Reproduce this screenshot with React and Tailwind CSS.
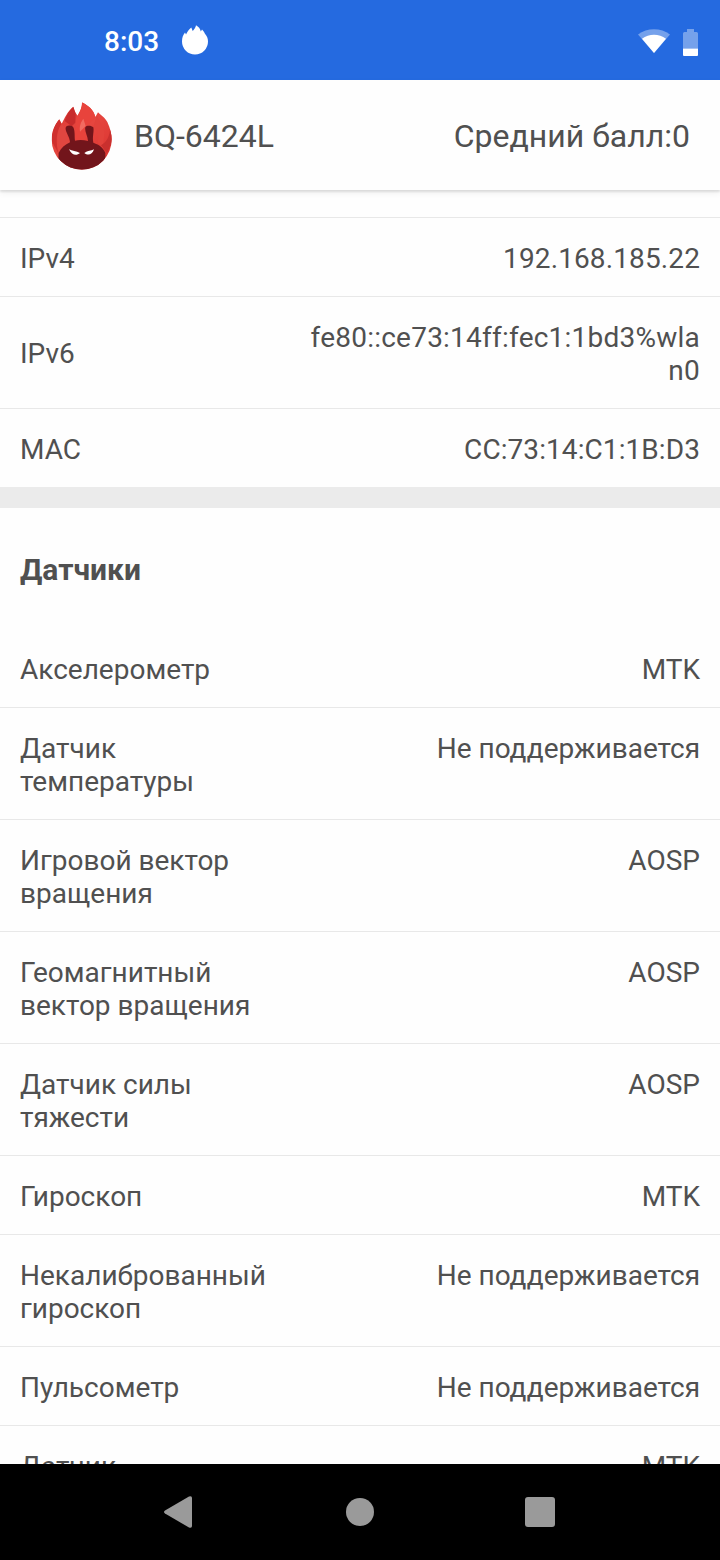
import React from 'react';

const network = [
    { label: 'IPv4', value: '192.168.185.22', spacing: 'tracking-[0.12px]' },
    { label: 'IPv6', value: 'fe80::ce73:14ff:fec1:1bd3%wlan0', centered: true, spacing: 'tracking-[0.23px]' },
    { label: 'MAC', value: 'CC:73:14:C1:1B:D3', spacing: 'tracking-[0.08px]' },
];

const sensors = [
    { label: 'Акселерометр', value: 'MTK' },
    { label: 'Датчик температуры', value: 'Не поддерживается' },
    { label: 'Игровой вектор вращения', value: 'AOSP' },
    { label: 'Геомагнитный вектор вращения', value: 'AOSP' },
    { label: 'Датчик силы тяжести', value: 'AOSP' },
    { label: 'Гироскоп', value: 'MTK' },
    { label: 'Некалиброванный гироскоп', value: 'Не поддерживается' },
    { label: 'Пульсометр', value: 'Не поддерживается' },
    { label: 'Датчик освещённости', value: 'MTK' },
];

const FlameIcon = () => (
    <svg className="h-[30px] w-[26px]" viewBox="0 0 26 30" fill="#fff">
        <path d="M0 16.500C0 12.500 1 10 3 7.500L4 9.500C5 7 7 4.500 9.300 2.500L10.700 6C12.200 4.500 13.800 2.500 14 .3C16.500 2 18.300 3.500 18.800 6.500L20 4.500C21.300 6 22.300 7 22.800 8.500C25 11 26 13.500 26 16.500a13 13 0 0 1-26 0z" />
    </svg>
);

const WifiIcon = () => (
    <svg className="h-[24px] w-[32px]" viewBox="0 0 32 24" fill="#fff">
        <path d="M0 5.500C9-1.600 23-1.600 32 5.500L16 24z" opacity=".37" />
        <path d="M4 9.700C11 4.400 21 4.400 28 9.700L16 24z" />
    </svg>
);

const BatteryIcon = () => (
    <svg className="h-[27px] w-[15px]" viewBox="0 0 15 27" fill="#fff">
        <path d="M4 0h7v3h2.500A1.500 1.500 0 0 1 15 4.500V19.500H0V4.500A1.500 1.500 0 0 1 1.500 3H4z" opacity=".37" />
        <path d="M0 19.500h15V26a1 1 0 0 1-1 1H1a1 1 0 0 1-1-1z" />
    </svg>
);

const Logo = () => (
    <svg className="h-[68px] w-[62px]" viewBox="34 37 186 204">
        <defs>
            <linearGradient id="flame" x1="0" y1="0" x2="1" y2="1">
                <stop offset="0" stopColor="#d93a34" />
                <stop offset=".5" stopColor="#e6463f" />
                <stop offset="1" stopColor="#d72f2c" />
            </linearGradient>
            <clipPath id="disc">
                <path d="M36 151C36 126 44 107 59 89L66 102C76 84 82 66 101 51C105 62 106 69 114 78C121 65 127 55 127 38C146 48 162 60 167 82L175 68C185 78 194 82 203 97C212 117 216 133 216 149A90 90 0 0 1 36 151z" />
            </clipPath>
        </defs>
        <g clipPath="url(#disc)">
            <path d="M30 30h190v215H30z" fill="url(#flame)" />
            <path d="M101 50C90 60 80 78 75 94L96 110 107 99 108 72z" fill="#c82c2c" />
            <path d="M58 88C44 105 36 128 36 154L58 194C48 164 48 124 66 102z" fill="#cf302e" />
            <path d="M66 102C49 130 50 158 66 184L88 160 78 116z" fill="#e04640" />
            <path d="M127 38C127 56 116 68 109 89L105 153H138L140 109 168 83C163 59 149 49 127 38z" fill="#e8433c" />
            <path d="M131 87C124 97 118 109 121 126L138 109z" fill="#f16b61" />
            <path d="M161 111C173 121 179 134 174 158L190 178 194 128C189 105 179 96 172 77z" fill="#e2423b" />
            <path d="M211 115C211 140 200 158 184 167L202 190 220 150z" fill="#c9302e" />
            <path d="M91 158C90 140 76 126 78 114C80 106 92 105 100 111C107 123 104 140 106 153C119 150 132 151 145 154C144 138 134 123 137 113C141 106 156 108 161 113C164 125 157 143 161 159C180 166 190 173 197 190L196 245H55L57 190C64 175 76 165 91 158z" fill="#72151b" />
            <path d="M88 179C97 184 110 184 121 190C111 199 97 198 88 179zM163 179C154 184 144 183 134 190C144 198 157 197 163 179z" fill="#fff" />
        </g>
    </svg>
);

const Row = ({ label, value, centered, spacing = '', last }) => (
    <div
        className={`flex shrink-0 justify-between px-5 pt-6 pb-[21px] ${centered ? 'items-center' : 'items-start'} ${
            last ? '' : 'border-b border-[#e8e8e8]'
        }`}
    >
        <div className={`w-[250px] pr-1 ${centered ? 'pb-0.5' : ''}`}>{label}</div>
        <div className={`w-[396px] break-all text-right ${spacing}`}>{value}</div>
    </div>
);

const App = () => {
    return (
        <div className="flex h-[1560px] w-[720px] flex-col overflow-hidden bg-[#fefefe] font-[Roboto,sans-serif] text-[28px] leading-[33px] text-[#505050]">
            <div className="flex h-20 shrink-0 items-center bg-[#256ae0] pt-[2px] pr-[22px] pl-[104px] text-white">
                <span className="w-[78px] font-medium">8:03</span>
                <div className="pb-[2px]">
                    <FlameIcon />
                </div>
                <div className="ml-auto flex items-center gap-[13px]">
                    <WifiIcon />
                    <div className="pt-[3px]">
                        <BatteryIcon />
                    </div>
                </div>
            </div>

            <div className="z-10 flex h-[110px] shrink-0 items-center bg-[#fefefe] pt-[2px] pr-[30px] pl-[51px] text-[32px] shadow-[0_2px_2px_rgba(0,0,0,0.10),0_3px_7px_rgba(0,0,0,0.06)]">
                <Logo />
                <span className="ml-[21px]">BQ-6424L</span>
                <span className="ml-auto">Средний балл:0</span>
            </div>

            <div className="flex min-h-0 flex-1 flex-col overflow-hidden">
                <div className="h-7 shrink-0 border-b border-[#e8e8e8]" />
                {network.map((item, index) => (
                    <Row key={item.label} {...item} last={index === network.length - 1} />
                ))}
                <div className="h-[21px] shrink-0 bg-[#ebebeb]" />
                <h2 className="flex h-[121px] shrink-0 items-center px-5 pt-[2px] text-[30px] font-bold">Датчики</h2>
                {sensors.map((item) => (
                    <Row key={item.label} {...item} />
                ))}
            </div>

            <div className="flex h-24 shrink-0 items-center bg-black px-[162px] text-[#9a9a9a]">
                <svg className="h-8 w-full" viewBox="0 0 396 32" fill="currentColor">
                    <path d="M3 14.500L27 .5Q30-.5 30 2V30Q30 32.500 27 31.500L3 17.500Q1 16 3 14.500z" />
                    <circle cx="198" cy="16" r="14" />
                    <rect x="363" y="1" width="30" height="30" rx="3" />
                </svg>
            </div>
        </div>
    );
};

export default App;
